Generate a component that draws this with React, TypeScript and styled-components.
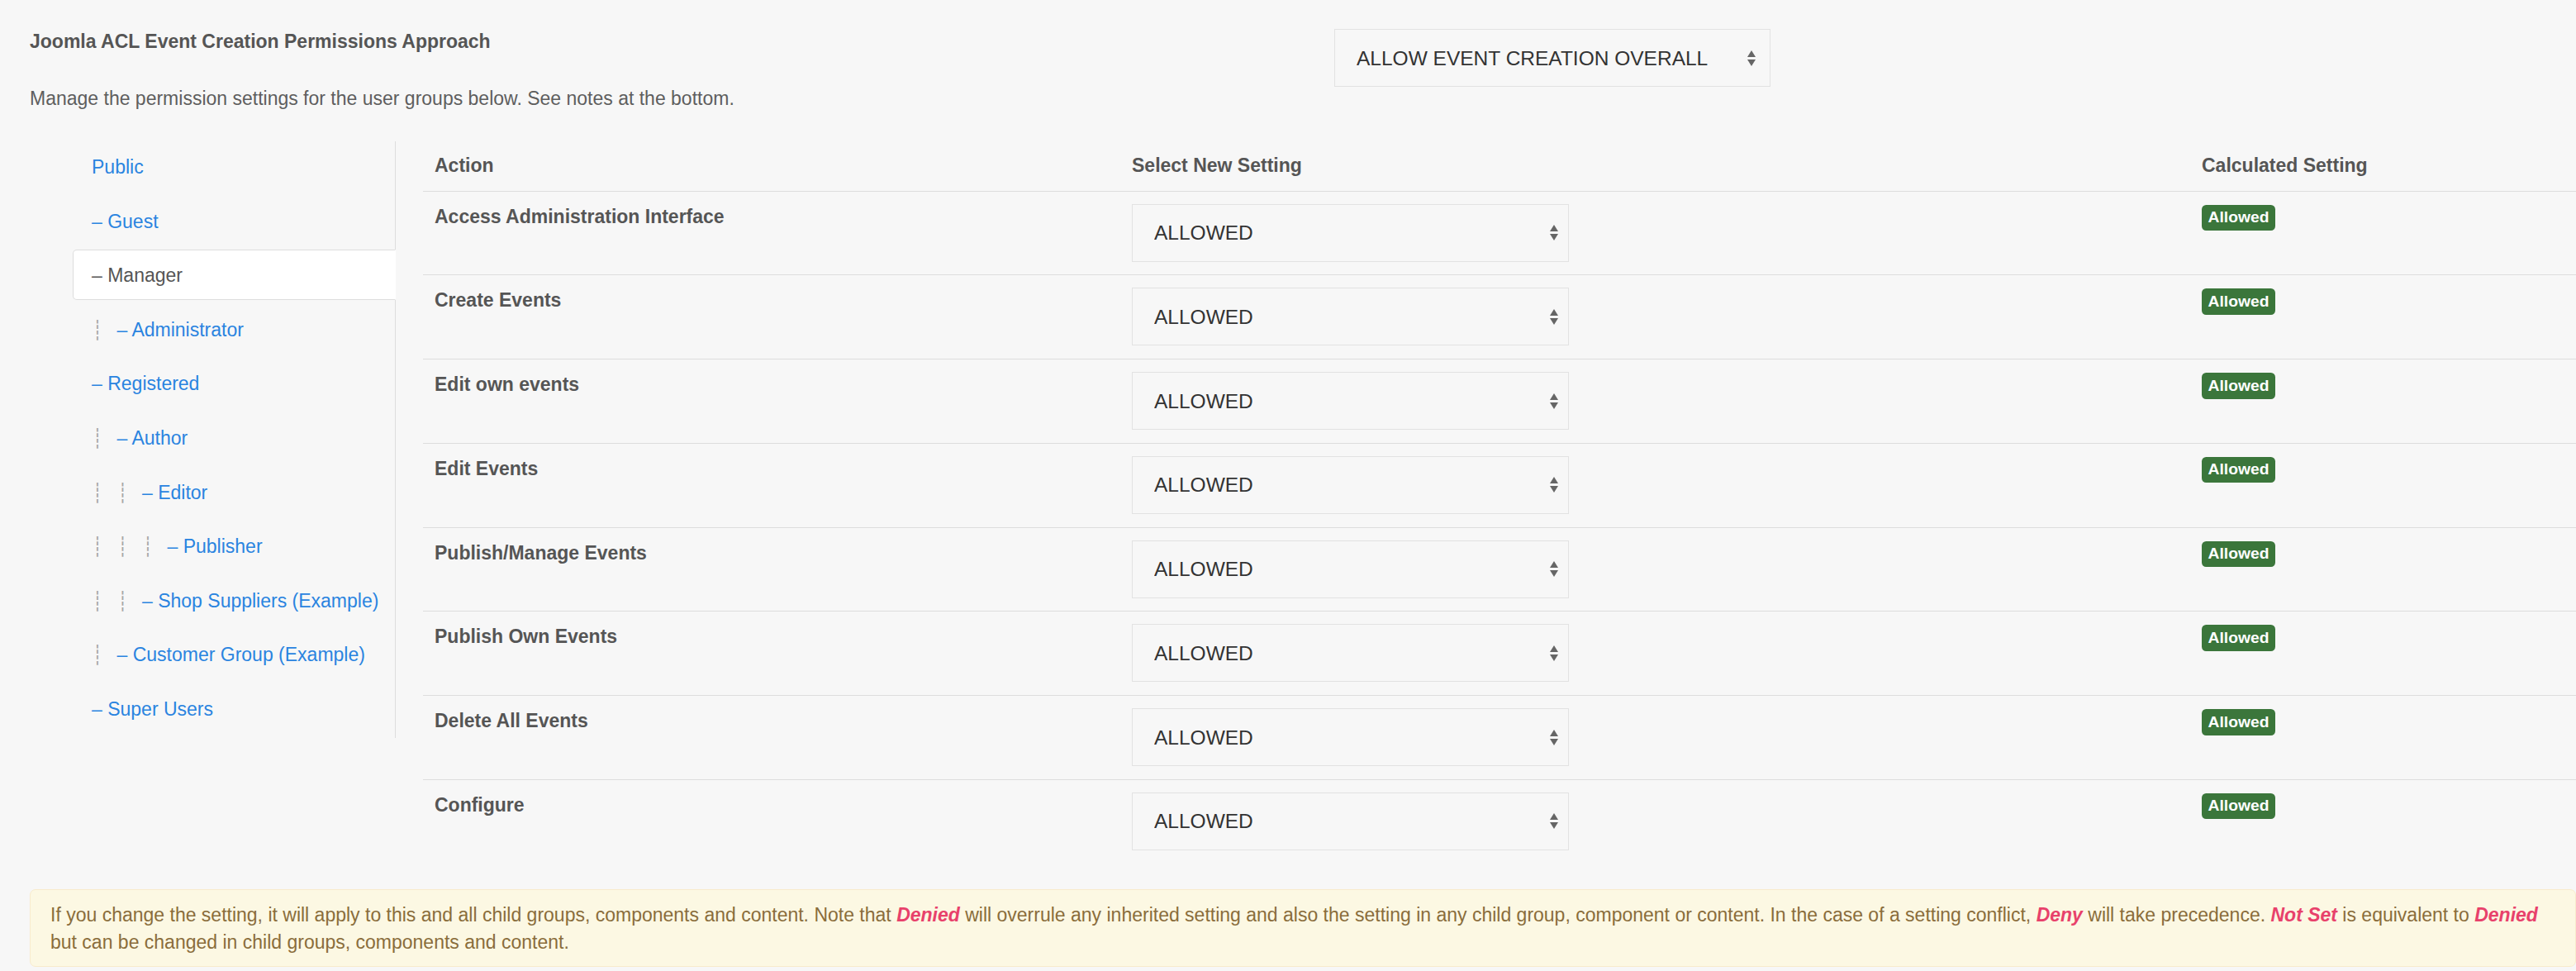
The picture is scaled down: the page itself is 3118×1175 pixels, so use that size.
import styled, { createGlobalStyle } from "styled-components";

const groups = [
	{ name: "Public", level: 0, dash: false },
	{ name: "Guest", level: 0, dash: true },
	{ name: "Manager", level: 0, dash: true, active: true },
	{ name: "Administrator", level: 1, dash: true },
	{ name: "Registered", level: 0, dash: true },
	{ name: "Author", level: 1, dash: true },
	{ name: "Editor", level: 2, dash: true },
	{ name: "Publisher", level: 3, dash: true },
	{ name: "Shop Suppliers (Example)", level: 2, dash: true },
	{ name: "Customer Group (Example)", level: 1, dash: true },
	{ name: "Super Users", level: 0, dash: true },
];

const actions = [
	"Access Administration Interface",
	"Create Events",
	"Edit own events",
	"Edit Events",
	"Publish/Manage Events",
	"Publish Own Events",
	"Delete All Events",
	"Configure",
];

function Arrows() {
	return (
		<ArrowIcon width="10" height="19" viewBox="0 0 10 19">
			<polygon points="5,0 10,8 0,8" />
			<polygon points="0,11 10,11 5,19" />
		</ArrowIcon>
	);
}

function SettingSelect({ value, width, gap }: { value: string; width: number; gap: number }) {
	return (
		<SelectBox $width={width} $gap={gap}>
			<Select defaultValue={value}>
				<option>{value}</option>
			</Select>
			<Arrows />
		</SelectBox>
	);
}

export default function App() {
	return (
		<>
			<GlobalStyle />
			<Page>
				<Header>
					<div>
						<Title>Joomla ACL Event Creation Permissions Approach</Title>
						<Intro>Manage the permission settings for the user groups below. See notes at the bottom.</Intro>
					</div>
					<SettingSelect value="ALLOW EVENT CREATION OVERALL" width={528} gap={17} />
				</Header>

				<Content>
					<Nav>
						{groups.map((g) => (
							<NavItem key={g.name}>
								<NavLink href="#" $active={!!g.active}>
									{Array.from({ length: g.level }).map((_, i) => (
										<Gi key={i}>┊</Gi>
									))}
									{g.dash ? "– " : ""}
									{g.name}
								</NavLink>
							</NavItem>
						))}
					</Nav>

					<TableWrap>
						<Table>
							<thead>
								<tr>
									<Th $width={816}>Action</Th>
									<Th $width={1267}>Select New Setting</Th>
									<Th>Calculated Setting</Th>
								</tr>
							</thead>
							<tbody>
								{actions.map((a) => (
									<tr key={a}>
										<ActionCell>{a}</ActionCell>
										<Td>
											<SettingSelect value="ALLOWED" width={529} gap={12} />
										</Td>
										<Td>
											<Badge>Allowed</Badge>
										</Td>
									</tr>
								))}
							</tbody>
						</Table>
					</TableWrap>
				</Content>

				<Alert>
					If you change the setting, it will apply to this and all child groups, components and content. Note
					that <Warn>Denied</Warn> will overrule any inherited setting and also the setting in any child group,
					component or content. In the case of a setting conflict, <Warn>Deny</Warn> will take precedence.{" "}
					<Warn>Not Set</Warn> is equivalent to <Warn>Denied</Warn> but can be changed in child groups,
					components and content.
				</Alert>
			</Page>
		</>
	);
}

const GlobalStyle = createGlobalStyle`
	body {
		margin: 0;
		background: #f7f7f7;
		font-family: "Liberation Sans", Arial, sans-serif;
		font-size: 23px;
		color: #555;
		overflow: hidden;
	}
`;

const Page = styled.div`
	width: 3118px;
	box-sizing: border-box;
	padding: 35px 0 0 36px;
`;

const Header = styled.div`
	display: grid;
	grid-template-columns: 1579px 528px;
	align-items: start;
`;

const Title = styled.h3`
	margin: 0;
	font-size: 23px;
	line-height: 31.5px;
	font-weight: bold;
	color: #555;
`;

const Intro = styled.p`
	margin: 37px 0 0;
	line-height: 31.5px;
	color: #5e5e5e;
`;

const SelectBox = styled.div<{ $width: number; $gap: number }>`
	display: flex;
	align-items: center;
	width: ${(p) => p.$width}px;
	height: 70px;
	box-sizing: border-box;
	border: 1px solid #e2e2e2;
	padding-right: ${(p) => p.$gap}px;
	background: #f7f7f7;
`;

const Select = styled.select`
	appearance: none;
	flex: 1;
	height: 100%;
	border: none;
	background: transparent;
	padding: 0 0 0 26px;
	font-family: "Liberation Sans", Arial, sans-serif;
	font-size: 24.5px;
	color: #333;
	outline: none;
`;

const ArrowIcon = styled.svg`
	fill: #666;
	flex-shrink: 0;
	pointer-events: none;
`;

const Content = styled.div`
	display: flex;
	align-items: flex-start;
	margin: 36px 0 0 52px;
`;

const Nav = styled.ul`
	list-style: none;
	margin: 0;
	padding: 0;
	width: 391px;
	box-sizing: border-box;
	border-right: 1px solid #ddd;
`;

const NavItem = styled.li`
	margin-bottom: 4.6px;
`;

const NavLink = styled.a<{ $active: boolean }>`
	display: block;
	margin-right: -1px;
	padding: 15px 22px 13px;
	line-height: 31px;
	border: 1px solid ${(p) => (p.$active ? "#ddd" : "transparent")};
	border-right-color: transparent;
	border-radius: 5px 0 0 5px;
	background: ${(p) => (p.$active ? "#fff" : "transparent")};
	color: ${(p) => (p.$active ? "#555" : "#2a84e0")};
	text-decoration: none;
	white-space: nowrap;
`;

const Gi = styled.span`
	display: inline-block;
	width: 30.5px;
	font-family: "DejaVu Sans", sans-serif;
	line-height: 31px;
	color: #a8a8a8;
	vertical-align: top;
`;

const TableWrap = styled.div`
	flex: 1;
	margin-left: 33px;
`;

const Table = styled.table`
	width: 100%;
	border-collapse: collapse;
	table-layout: fixed;
`;

const Th = styled.th<{ $width?: number }>`
	width: ${(p) => (p.$width ? `${p.$width}px` : "auto")};
	padding: 14px;
	line-height: 31.5px;
	text-align: left;
	font-weight: bold;
	color: #555;
	border-bottom: 1px solid #ddd;
`;

const Td = styled.td`
	padding: 15px 14px 15.75px;
	line-height: 31.5px;
	vertical-align: top;
	border-top: 1px solid #ddd;
`;

const ActionCell = styled(Td)`
	font-weight: bold;
	color: #555;
`;

const Badge = styled.span`
	display: inline-block;
	margin-top: 1px;
	padding: 3.5px 7.6px;
	line-height: 24.5px;
	font-size: 19.25px;
	font-weight: bold;
	color: #fff;
	background: #3b763b;
	border-radius: 5.25px;
	vertical-align: top;
`;

const Alert = styled.div`
	width: 3082px;
	box-sizing: border-box;
	margin-top: 31.5px;
	padding: 14px 24px 12px;
	line-height: 33px;
	color: #8a6d3b;
	background: #fcf8e3;
	border: 1px solid #f8ebcc;
	border-radius: 7px;
`;

const Warn = styled.em`
	font-weight: bold;
	color: #e8416b;
`;
